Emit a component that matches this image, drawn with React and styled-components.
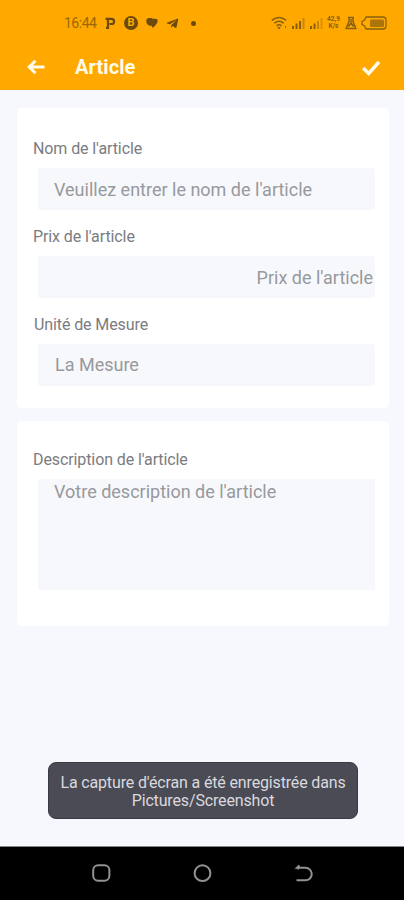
import React from "react";
import styled, { createGlobalStyle } from "styled-components";
import { FaTelegramPlane } from "react-icons/fa";

const App = () => {
  return (
    <Screen>
      <GlobalStyle />
      <Header>
        <StatusBar />
        <TitleBar>
          <BackIcon />
          <h1>Article</h1>
          <CheckIcon />
        </TitleBar>
      </Header>
      <Content>
        <Card $height={300}>
          <Label>Nom de l'article</Label>
          <Field>Veuillez entrer le nom de l'article</Field>
          <Label>Prix de l'article</Label>
          <Field $right>Prix de l'article</Field>
          <Label $indent={1}>Unité de Mesure</Label>
          <Field $indent={1}>La Mesure</Field>
        </Card>
        <Card $height={205}>
          <Label $tight>Description de l'article</Label>
          <TextArea>Votre description de l'article</TextArea>
        </Card>
      </Content>
      <Toast>
        La capture d'écran a été enregistrée dans
        <br />
        Pictures/Screenshot
      </Toast>
      <NavBar />
    </Screen>
  );
};

const StatusBar = () => (
  <Status>
    <Time>16:44</Time>
    <Notifications>
      <svg width="11" height="14" viewBox="0 0 11 14" fill="none" stroke="currentColor" strokeWidth="2.200">
        <path d="M3 12.800V2.800h3.500a2.500 2.500 0 0 1 0 5.200H4.500M.5 2.800h3M1 11.800h3" />
      </svg>
      <Coin>B</Coin>
      <svg width="12" height="12" viewBox="0 0 12 12" fill="currentColor">
        <path d="M3 1h2.500l1 .8h3Q12 2 11.600 4.600 11 7.500 6.500 11L5.800 8.800H3.600Q.4 7.500.3 4.300.4 1 3 1z" />
      </svg>
      <FaTelegramPlane size={13} />
      <Dot />
    </Notifications>
    <System>
      <svg width="17" height="14" viewBox="0 0 17 14" fill="none" stroke="currentColor" strokeWidth="1.500">
        <path d="M.8 4.300Q8 -1.200 15.200 4.300M3.300 7.200Q8 3.300 12.700 7.200M5.600 9.800Q8 7.800 10.400 9.800" />
        <path d="M6.800 11.500h2.400L8 13zM14.500 10v2" fill="currentColor" strokeWidth="0.8" />
      </svg>
      <Signal level={4} />
      <Signal level={3} />
      <Speed>
        <span>42,9</span>
        <span>K/s</span>
      </Speed>
      <svg width="12" height="14" viewBox="0 0 12 14" fill="none" stroke="currentColor" strokeWidth="1.500">
        <path d="M3 1.500h6M4 1.500v4L1.200 12.500h9.600L8 5.500v-4M6 3v4M3.500 10.500L6 7l2.500 3.500" />
      </svg>
      <svg width="26" height="14" viewBox="0 0 26 14" fill="none" stroke="currentColor" strokeWidth="1.300">
        <path d="M5 1h17a3 3 0 0 1 3 3v6a3 3 0 0 1-3 3H5L3.500 10 1 8.500v-3L3.500 4z" />
        <rect x="9" y="3.500" width="14" height="7.500" rx="1.500" fill="currentColor" fillOpacity="0.7" stroke="none" />
      </svg>
    </System>
  </Status>
);

const Signal = ({ level }) => (
  <svg width="13" height="12" viewBox="0 0 13 12" fill="currentColor">
    <rect x="0" y="9" width="2" height="3" />
    <rect x="3.500" y="6.500" width="2" height="5.500" />
    <rect x="7" y="4" width="2" height="8" opacity={level > 3 ? 1 : 0.5} />
    <rect x="10.500" y="1" width="2" height="11" opacity={level > 3 ? 0.45 : 0.3} />
  </svg>
);

const BackIcon = () => (
  <svg width="18" height="16" viewBox="0 0 18 16" fill="none" stroke="currentColor" strokeWidth="3">
    <path d="M17.500 7H2M8.500 .8L2.200 7l6.300 6.300" />
  </svg>
);

const CheckIcon = () => (
  <svg width="20" height="18" viewBox="0 0 20 18" fill="none" stroke="currentColor" strokeWidth="3.400">
    <path d="M2.200 9l5.500 5.500L18 3" />
  </svg>
);

const NavBar = () => (
  <Nav>
    <svg width="20" height="20" viewBox="0 0 20 20">
      <rect x="2.200" y="2.200" width="16.200" height="15.600" rx="5" />
    </svg>
    <svg width="20" height="20" viewBox="0 0 20 20">
      <circle cx="10.500" cy="10.200" r="7.900" />
    </svg>
    <svg width="20" height="20" viewBox="0 0 20 20">
      <path d="M6.500 2.500L4 4.800h8.500a6 6 0 0 1 0 12.500H3.500M4 4.800l2 1.200" />
    </svg>
  </Nav>
);

// styled components
const GlobalStyle = createGlobalStyle`
  * {
    box-sizing: border-box;
  }
  body {
    margin: 0;
    font-family: Roboto, "Liberation Sans", sans-serif;
  }
  svg {
    display: block;
    flex: none;
  }
`;

const Screen = styled.div`
  position: relative;
  display: flex;
  flex-direction: column;
  width: 404px;
  height: 900px;
  overflow: hidden;
  background: #f7f8fd;
`;

const Header = styled.header`
  height: 90px;
  background: #ffa800;
`;

const Status = styled.div`
  display: flex;
  align-items: center;
  height: 46px;
  padding: 0 17px 0 64px;
  color: #6b4a0c;
`;

const Time = styled.span`
  width: 41px;
  font-size: 14px;
  letter-spacing: -0.5px;
  color: #9a6806;
`;

const Notifications = styled.div`
  display: flex;
  align-items: center;
  gap: 8px;
`;

const Coin = styled.span`
  display: block;
  width: 14px;
  height: 14px;
  border-radius: 50%;
  background: #6b4a0c;
  font-size: 11px;
  font-weight: 700;
  line-height: 14px;
  text-align: center;
  color: #ffa800;
`;

const Dot = styled.i`
  width: 5px;
  height: 5px;
  margin-left: 4px;
  border-radius: 50%;
  background: currentColor;
`;

const System = styled.div`
  display: flex;
  align-items: center;
  gap: 4.5px;
  margin-left: auto;
  color: #87600f;
`;

const Speed = styled.div`
  display: flex;
  flex-direction: column;
  align-items: center;
  width: 13px;
  font-size: 6.5px;
  font-weight: 700;
  line-height: 7px;
`;

const TitleBar = styled.div`
  display: flex;
  align-items: center;
  height: 43px;
  padding: 0 23px 0 27px;
  color: #fffbea;
  h1 {
    flex: 1;
    margin: -2px 0 0 30px;
    font-size: 20px;
    font-weight: 700;
    line-height: 24px;
    letter-spacing: 0.1px;
  }
`;

const Content = styled.main`
  display: flex;
  flex: 1;
  flex-direction: column;
  gap: 13px;
  padding: 18px 15px 0 17px;
`;

const Card = styled.section`
  height: ${({ $height }) => $height}px;
  padding: 29px 14px 0 16px;
  border-radius: 5px;
  background: #fff;
`;

const Label = styled.div`
  height: ${({ $tight }) => ($tight ? 20 : 22)}px;
  margin: 0 0 9px ${({ $indent = 0 }) => $indent}px;
  font-size: 16px;
  line-height: ${({ $tight }) => ($tight ? 20 : 24)}px;
  letter-spacing: -0.1px;
  color: #7b7c7f;
`;

const Field = styled.div`
  height: 42px;
  margin: 0 0 15px 5px;
  padding: 0 2px 0 ${({ $indent = 0 }) => 16 + $indent}px;
  border-radius: 2px;
  background: #f7f8fc;
  font-size: 18px;
  line-height: ${({ $indent }) => ($indent ? 41 : 43)}px;
  text-align: ${({ $right }) => ($right ? "right" : "left")};
  color: #97999d;
`;

const TextArea = styled(Field)`
  height: 111px;
  line-height: 26px;
`;

const Toast = styled.div`
  position: absolute;
  top: 762px;
  left: 48px;
  width: 310px;
  height: 57px;
  padding-top: 11px;
  border: 1px solid #383943;
  border-radius: 8px;
  background: #4a4b54;
  font-size: 16px;
  line-height: 18px;
  letter-spacing: -0.15px;
  text-align: center;
  white-space: nowrap;
  color: #d9d9df;
`;

const Nav = styled.nav`
  display: flex;
  justify-content: space-between;
  height: 54px;
  padding: 16px 91px 0;
  border-top: 1px solid #85868a;
  background: #000;
  svg {
    fill: none;
    stroke: #929292;
    stroke-width: 2;
  }
`;

export default App;
